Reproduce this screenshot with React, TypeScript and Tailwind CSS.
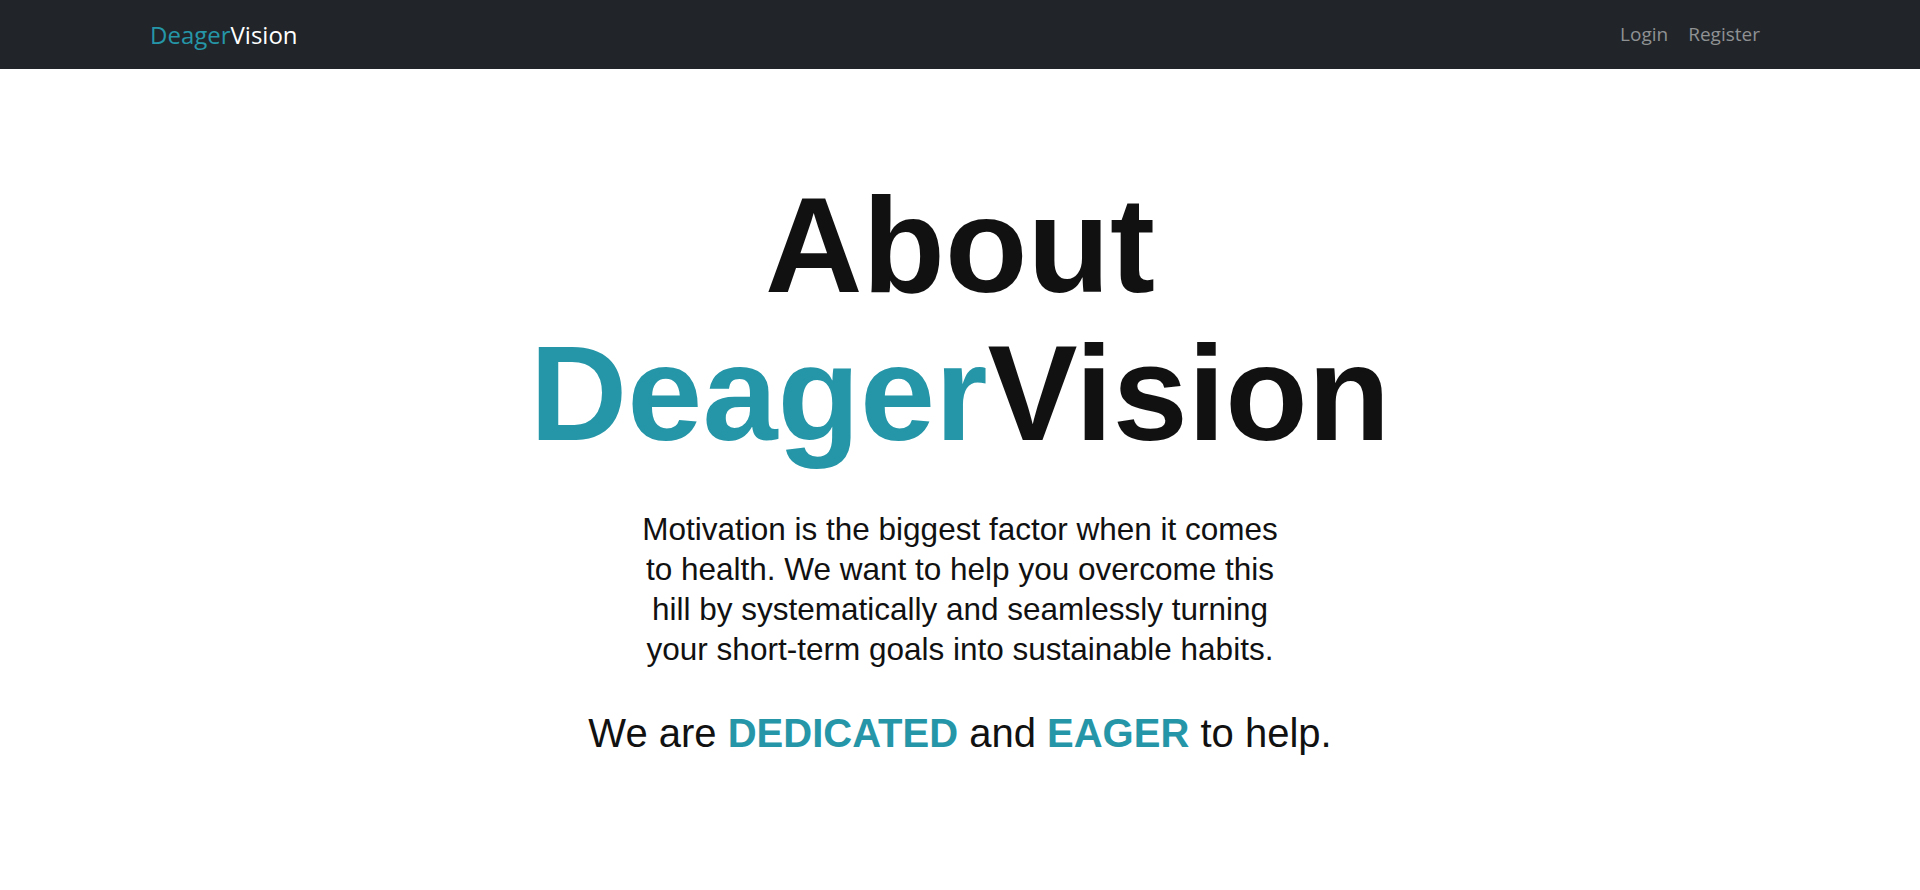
export default function App() {
  return (
    <div className="min-h-screen bg-white font-['Liberation_Sans',Arial,sans-serif] text-[#111111]">
      {/* Navbar */}
      <nav className="bg-[#212529] h-[69px]">
        <div className="max-w-[1650px] mx-auto px-[15px] h-full flex items-center justify-between font-['Open_Sans',sans-serif]">
          <a href="#" className="text-[24px] leading-none">
            <span className="text-[#2596a8]">Deager</span>
            <span className="text-white">Vision</span>
          </a>
          <div className="flex items-center text-[19px] text-[#8f9193]">
            <a href="#" className="px-[10px]">Login</a>
            <a href="#" className="px-[10px]">Register</a>
          </div>
        </div>
      </nav>

      {/* About */}
      <main className="pt-[103px] flex flex-col items-center text-center">
        <h1 className="text-[135px] leading-[148px] font-bold">
          About
          <br />
          <span className="text-[#2596a8]">Deager</span>Vision
        </h1>
        <p className="mt-[41px] w-[650px] text-[31.5px] leading-[40px]">
          Motivation is the biggest factor when it comes to health. We want to help you overcome this hill by
          systematically and seamlessly turning your short-term goals into sustainable habits.
        </p>
        <p className="mt-[36px] text-[40px] leading-[57px]">
          We are <span className="font-bold text-[#2596a8]">DEDICATED</span> and{' '}
          <span className="font-bold text-[#2596a8]">EAGER</span> to help.
        </p>
      </main>
    </div>
  );
}
